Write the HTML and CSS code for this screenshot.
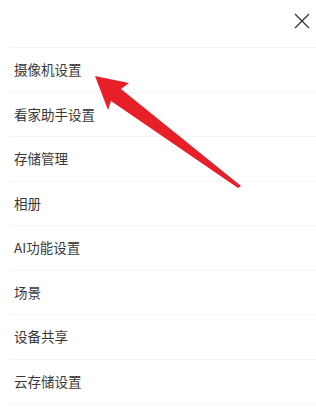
FILE: index.html
```html
<!DOCTYPE html>
<html lang="zh-CN">
<head>
    <meta charset="UTF-8">
    <meta name="viewport" content="width=device-width, initial-scale=1.0">
    <title>设置</title>
    <link rel="stylesheet" href="styles.css">
</head>
<body>
    <div class="panel">
        <div class="header">
            <span class="close-btn">
                <svg width="16" height="16" viewBox="0 0 16 16">
                    <path d="M1 1 L15 15 M15 1 L1 15" stroke="#333" stroke-width="1.3" fill="none"/>
                </svg>
            </span>
        </div>
        <ul class="menu">
            <li class="menu-item">摄像机设置</li>
            <li class="menu-item">看家助手设置</li>
            <li class="menu-item">存储管理</li>
            <li class="menu-item">相册</li>
            <li class="menu-item">AI功能设置</li>
            <li class="menu-item">场景</li>
            <li class="menu-item">设备共享</li>
            <li class="menu-item">云存储设置</li>
        </ul>
        <svg class="pointer" width="316" height="409" viewBox="0 0 316 409">
            <polygon points="95,76 129,83 121,89 241,186 238,188 111,101 108,110" fill="#e61f29"/>
        </svg>
    </div>
</body>
</html>
```

FILE: styles.css
```css
body {
    margin: 0;
    background: #fff;
    font-family: "Noto Sans CJK SC", "Noto Sans", sans-serif;
}
.panel {
    position: relative;
    width: 316px;
    height: 409px;
    overflow: hidden;
}
.header {
    height: 47px;
    display: flex;
    justify-content: flex-end;
}
.close-btn {
    padding: 10px 6px 0 0;
}
.menu {
    list-style: none;
    margin: 0 0 0 10px;
    padding: 0;
}
.menu-item {
    height: 43.5px;
    line-height: 43.5px;
    border-top: 1px solid #f4f4f4;
    padding-left: 4px;
    font-size: 13.5px;
    color: #383838;
}
.menu-item:last-child {
    border-bottom: 1px solid #f4f4f4;
}
.pointer {
    position: absolute;
    left: 0;
    top: 0;
}
```
